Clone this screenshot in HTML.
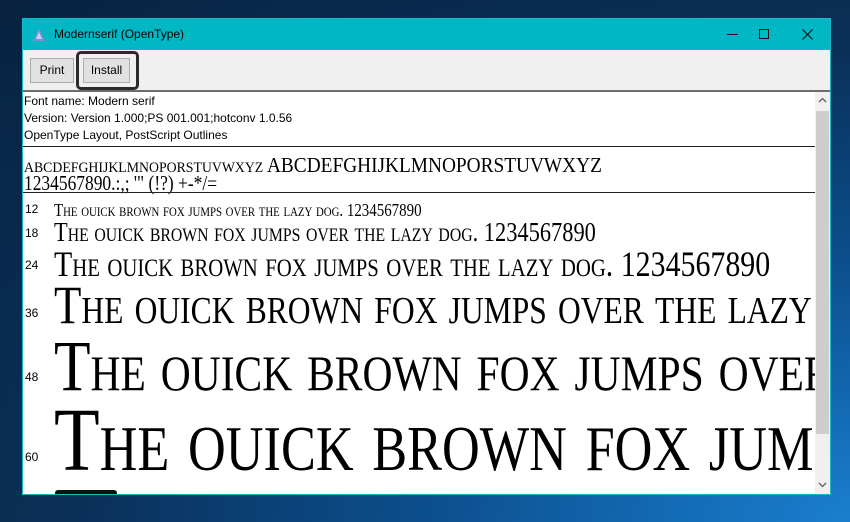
<!DOCTYPE html>
<html><head><style>
*{margin:0;padding:0;box-sizing:border-box}
body{width:850px;height:522px;overflow:hidden;position:relative;font-family:"Liberation Sans",sans-serif;
background:radial-gradient(ellipse at 100% 100%,#1a7fd0 0%,#0c4f8e 35%,#0a2f57 65%,#08223f 100%);}
.win{position:absolute;left:22px;top:18px;width:809px;height:477px;border:1px solid #19b9c4;background:#f0f0f0}
.title{position:absolute;left:0;top:0;width:807px;height:31px;background:#00b7c3;color:#000;font-size:12px}
.title span{position:absolute;left:31px;top:8px}
.tb{position:absolute;top:0;width:46px;height:31px}
.btn{position:absolute;top:39px;height:25px;background:#e1e1e1;border:1px solid #adadad;font-size:12px;text-align:center;line-height:23px}
.focus{position:absolute;left:53px;top:32px;width:63px;height:39px;border:3px solid #2b2b2b;border-radius:5px}
.sep{position:absolute;left:0;top:71px;width:807px;height:2px;background:#6d6d6d}
.content{position:absolute;left:0;top:73px;width:792px;height:402px;background:#fff;overflow:hidden}
.info{position:absolute;left:1px;font-size:12px;color:#000}
.hl{position:absolute;left:0;width:792px;height:1px;background:#222}
.s{position:absolute;left:31px;font-family:"Liberation Serif",serif;font-variant:small-caps;line-height:1;white-space:nowrap;transform:scaleX(.83);transform-origin:0 0;color:#000}
.lbl{position:absolute;left:2px;font-size:12px;color:#000}
.sb{position:absolute;left:792px;top:73px;width:15px;height:402px;background:#f0f0f0}
.thumb{position:absolute;left:1px;top:19px;width:13px;height:323px;background:#cdcdcd}
</style></head><body>
<div class="win">
 <div class="title">
  <svg style="position:absolute;left:9px;top:8px" width="14" height="15" viewBox="0 0 14 15"><path d="M7 1 L1 14 H13 Z" fill="#7a8fd6"/><path d="M7 5 L4 12 H10 Z" fill="#c8d4f5"/></svg>
  <span>Modernserif (OpenType)</span>
  <div class="tb" style="left:692px"><div style="position:absolute;left:12px;top:15px;width:11px;height:1px;background:#111"></div></div>
  <div class="tb" style="left:733px"><div style="position:absolute;left:3px;top:10px;width:10px;height:10px;border:1px solid #111"></div></div>
  <svg style="position:absolute;left:779px;top:10px" width="11" height="11" viewBox="0 0 11 11"><path d="M0.5 0.5 L10.5 10.5 M10.5 0.5 L0.5 10.5" stroke="#111" stroke-width="1.1"/></svg>
 </div>
 <div class="btn" style="left:7px;width:44px">Print</div>
 <div class="btn" style="left:60px;width:47px">Install</div>
 <div class="focus"></div>
 <div class="sep"></div>
 <div class="content">
  <div class="info" style="top:2px">Font name: Modern serif</div>
  <div class="info" style="top:19px">Version: Version 1.000;PS 001.001;hotconv 1.0.56</div>
  <div class="info" style="top:36px">OpenType Layout, PostScript Outlines</div>
  <div class="hl" style="top:54px"></div>
  <div class="s" style="left:1px;top:63px;font-size:21px;transform:scaleX(.92)">abcdefghijklmnoporstuvwxyz ABCDEFGHIJKLMNOPORSTUVWXYZ</div>
  <div class="s" style="left:1px;top:81px;font-size:21px">1234567890.:,; '" (!?) +-*/=</div>
  <div class="hl" style="top:100px"></div>
  <div class="lbl" style="top:110px">12</div>
  <div class="s" style="top:109px;font-size:18px">The ouick brown fox jumps over the lazy dog. 1234567890</div>
  <div class="lbl" style="top:134px">18</div>
  <div class="s" style="top:127px;font-size:27px">The ouick brown fox jumps over the lazy dog. 1234567890</div>
  <div class="lbl" style="top:166px">24</div>
  <div class="s" style="top:154px;font-size:36px">The ouick brown fox jumps over the lazy dog. 1234567890</div>
  <div class="lbl" style="top:214px">36</div>
  <div class="s" style="top:186px;font-size:54px">The ouick brown fox jumps over the lazy dog. 1234567890</div>
  <div class="lbl" style="top:278px">48</div>
  <div class="s" style="top:238px;font-size:72px">The ouick brown fox jumps over the lazy dog. 1234567890</div>
  <div class="lbl" style="top:358px">60</div>
  <div class="s" style="top:304px;font-size:90px">The ouick brown fox jumps over the lazy dog. 1234567890</div>
  <div style="position:absolute;left:32px;top:398px;width:62px;height:4px;background:#111;border-radius:3px 3px 0 0"></div>
 </div>
 <div class="sb">
  <svg style="position:absolute;left:3px;top:5px" width="9" height="6" viewBox="0 0 9 6"><path d="M1 5 L4.5 1.5 L8 5" stroke="#606060" stroke-width="1.3" fill="none"/></svg>
  <div class="thumb"></div>
  <svg style="position:absolute;left:3px;top:390px" width="9" height="6" viewBox="0 0 9 6"><path d="M1 1 L4.5 4.5 L8 1" stroke="#606060" stroke-width="1.3" fill="none"/></svg>
 </div>
</div>
</body></html>
